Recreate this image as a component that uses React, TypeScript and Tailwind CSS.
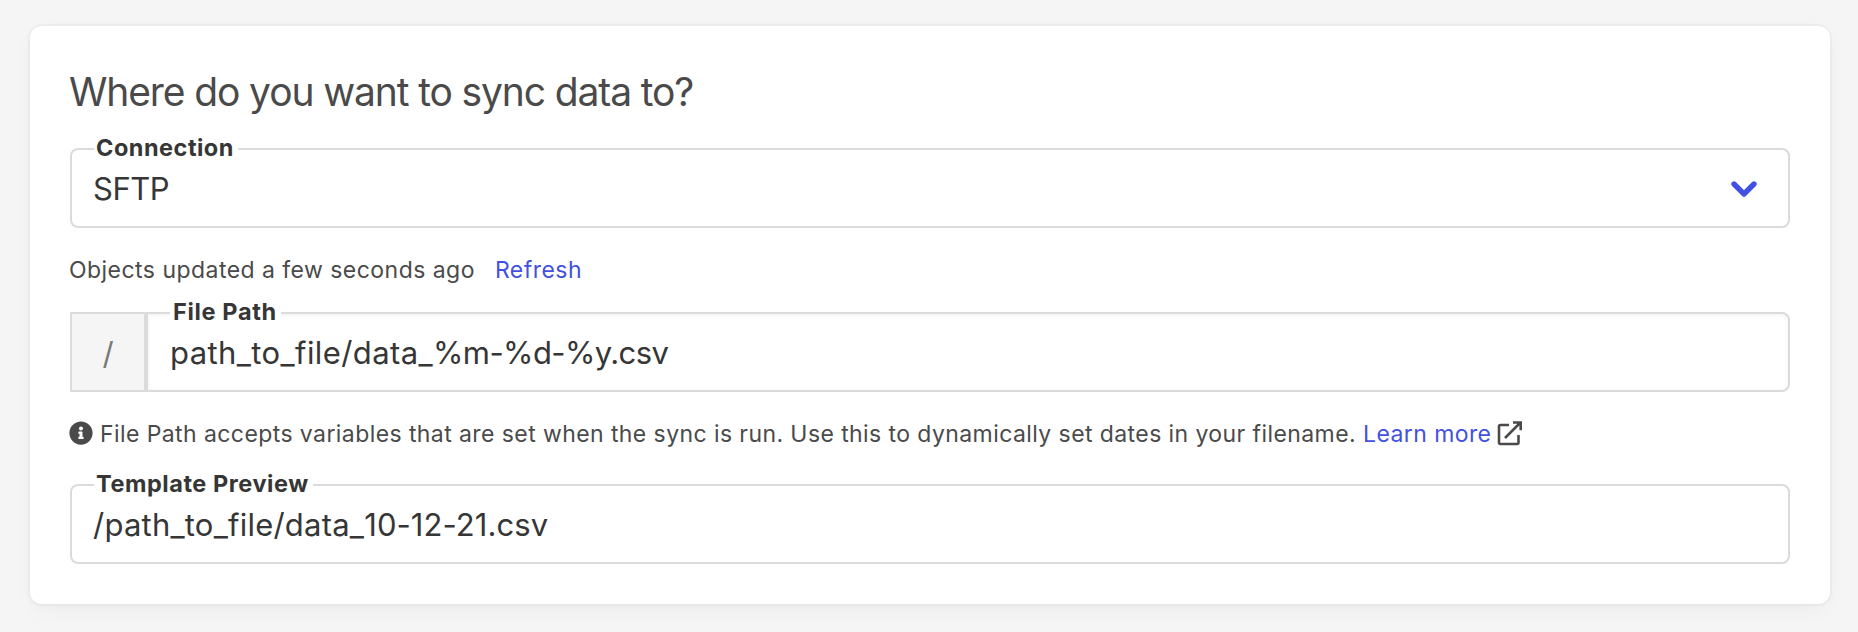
import React from 'react';
import { FaInfoCircle } from 'react-icons/fa';

function Label({ children, className }: { children: React.ReactNode; className: string }) {
  return (
    <span className={`absolute -top-[18px] left-[22px] whitespace-nowrap bg-white pr-[4px] text-[23.5px] leading-[32px] font-bold text-[#363636] ${className}`}>
      {children}
    </span>
  );
}

export default function App() {
  return (
    <main className="h-[632px] w-[1858px] bg-[#f5f5f5] pt-[26px] pr-[28px] pl-[30px] font-['Inter',sans-serif]">
      <section className="flex h-[578px] flex-col rounded-[12px] bg-white px-[40px] pt-[40px] shadow-[0_8px_24px_-4px_rgba(10,10,10,0.04),0_0_0_2px_rgba(10,10,10,0.025),0_2px_12px_rgba(10,10,10,0.025)]">
        <h1 className="-ml-px h-[52px] text-[39px] leading-[52px] tracking-[-1.12px] whitespace-nowrap text-[#4a4a4a]">
          Where do you want to sync data to?
        </h1>
        <div className="relative mt-[30px] flex h-[80px] items-center justify-between rounded-[8px] border-2 border-[#dbdbdb] px-[21px] text-[31px] text-[#363636]">
          <Label className="pl-[2px] tracking-[0.5px]">Connection</Label>
          <span className="pt-[2px] tracking-[-0.5px]">SFTP</span>
          <svg className="mt-px mr-[9px] h-[18px] w-[28px]" viewBox="0 0 28 18" fill="none" stroke="#4351e1" strokeWidth="5.4" strokeLinecap="round" strokeLinejoin="round">
            <path d="M4 4l10 10L24 4" />
          </svg>
        </div>
        <p className="mt-[24px] -ml-px flex h-[36px] items-center gap-[20px] text-[23px] tracking-[0.46px] text-[#4a4a4a]">
          <span>Objects updated a few seconds ago</span>
          <a className="text-[#4351e1]">Refresh</a>
        </p>
        <div className="mt-[24px] flex h-[80px] text-[31px]">
          <div className="flex w-[76px] items-center justify-center border-2 border-[#dbdbdb] bg-[#f5f5f5] pt-[5px] text-[#7a7a7a]">/</div>
          <div className="relative flex flex-1 items-center rounded-r-[8px] border-2 border-[#dbdbdb] px-[22px] text-[#363636] shadow-[inset_0_1px_4px_rgba(10,10,10,0.06)]">
            <Label className="pl-[3px] tracking-[0.65px]">File Path</Label>
            <span className="pt-[2px] tracking-[-0.6px]"><span className="tracking-[0.4px]">path_to_file/data_</span>%m-%d-%y.csv</span>
          </div>
        </div>
        <p className="mt-[24px] -ml-px flex h-[36px] items-center text-[23px] tracking-[0.415px] whitespace-nowrap text-[#4a4a4a]">
          <FaInfoCircle className="mt-[-2px] mr-[7px] h-[24px] w-[24px]" />
          <span>File Path accepts variables that are set when the sync is run. Use this to dynamically set dates in your filename.</span>
          <a className="ml-[7px] text-[#4351e1]">Learn more</a>
          <svg className="mt-[-2px] ml-[6px] h-[26px] w-[26px]" viewBox="0 0 26 26" fill="none" stroke="currentColor" strokeWidth="2.6">
            <path d="M12 5H3.5Q2 5 2 6.5V22.5Q2 24 3.5 24H20Q21.5 24 21.5 22.5V15" />
            <path d="M8 18L23 3M16 2.5h7.7v7.7" />
          </svg>
        </p>
        <div className="relative mt-[32px] flex h-[80px] items-center rounded-[8px] border-2 border-[#dbdbdb] px-[21px] text-[31px] text-[#363636]">
          <Label className="pl-[2px] tracking-[0.55px]">Template Preview</Label>
          <span className="pt-[2px] tracking-[0.08px]"><span className="tracking-[0.22px]">/path_to_file/data_</span>10-12-21.csv</span>
        </div>
      </section>
    </main>
  );
}
